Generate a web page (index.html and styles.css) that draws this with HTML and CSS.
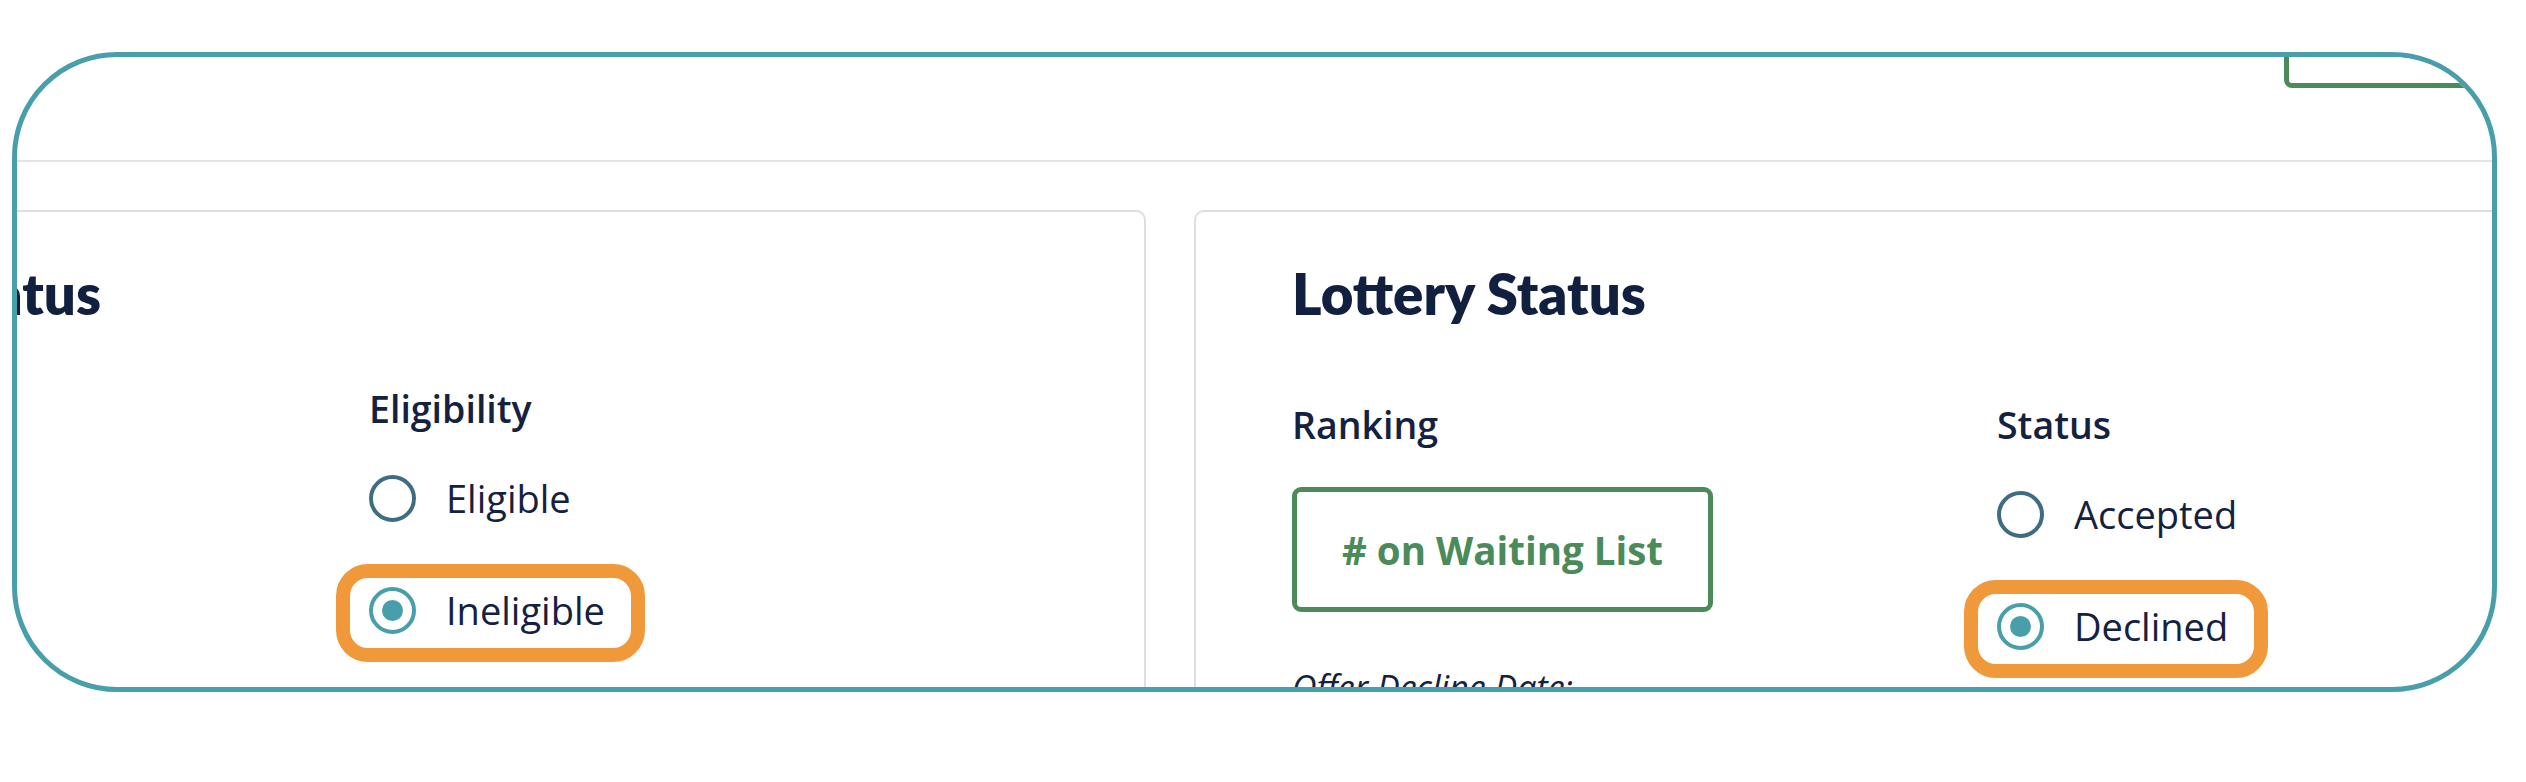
FILE: index.html
```html
<!DOCTYPE html>
<html lang="en">
<head>
<meta charset="utf-8">
<title>Lottery Status</title>
<link rel="stylesheet" href="styles.css">
</head>
<body>
<div class="frame">
  <header class="topbar">
    <div class="topbar-action" aria-hidden="true"></div>
  </header>
  <main class="cards">
    <section class="card card--left">
      <h2 class="card-title">Application Status</h2>
      <div class="card-grid">
        <div class="field"></div>
        <div class="field">
          <h3 class="field-label">Eligibility</h3>
          <div class="radio-group">
            <div class="radio"><span class="radio-dot"></span><span class="radio-text">Eligible</span></div>
            <div class="radio radio--checked radio--highlight"><span class="radio-dot"></span><span class="radio-text">Ineligible</span></div>
          </div>
        </div>
      </div>
    </section>
    <section class="card card--right">
      <h2 class="card-title">Lottery Status</h2>
      <div class="card-grid">
        <div class="field">
          <h3 class="field-label">Ranking</h3>
          <div class="rank-button"># on Waiting List</div>
          <p class="offer-date">Offer Decline Date:</p>
        </div>
        <div class="field">
          <h3 class="field-label">Status</h3>
          <div class="radio-group">
            <div class="radio"><span class="radio-dot"></span><span class="radio-text">Accepted</span></div>
            <div class="radio radio--checked radio--highlight"><span class="radio-dot"></span><span class="radio-text">Declined</span></div>
          </div>
        </div>
      </div>
    </section>
  </main>
</div>
</body>
</html>
```

FILE: styles.css
```css
* { box-sizing: border-box; }

html, body {
  margin: 0;
  background: #ffffff;
}

body {
  width: 2526px;
  height: 782px;
  overflow: hidden;
  font-family: "Open Sans", "Liberation Sans", sans-serif;
  color: #14213f;
}

.frame {
  margin: 52px 0 0 12px;
  width: 2485px;
  height: 640px;
  border: 5px solid #489fab;
  border-radius: 105px;
  overflow: hidden;
  background: #ffffff;
}

.topbar {
  height: 105px;
  border-bottom: 2px solid #e3e3e3;
  display: flex;
  justify-content: flex-end;
}

.topbar-action {
  flex: none;
  width: 300px;
  height: 80px;
  margin-top: -49px;
  margin-right: -92px;
  border: 5px solid #4b8b5a;
  border-radius: 8px;
  background: #ffffff;
}

.cards {
  display: flex;
  gap: 48px;
  padding-top: 48px;
  margin-left: -451px;
}

.card {
  flex: none;
  width: 1580px;
  height: 600px;
  border: 2px solid #dedede;
  border-radius: 10px;
  padding: 48px 0 0 96px;
}

.card-title {
  margin: 0;
  font-family: Lato, "Open Sans", sans-serif;
  font-weight: 800;
  font-size: 56.3px;
  line-height: 67px;
  color: #12203f;
  white-space: nowrap;
}

.card--left .card-title { margin-left: -28px; }

.card-grid {
  display: grid;
  grid-template-columns: 705px 1fr;
}

.card--left .card-grid { margin-top: 55px; }
.card--right .card-grid { margin-top: 71px; }

.field-label {
  margin: 0;
  font-weight: 600;
  font-size: 37.5px;
  line-height: 54px;
  color: #14213f;
}

.radio-group {
  display: flex;
  flex-direction: column;
  gap: 56px;
  margin-top: 34px;
}

.radio {
  position: relative;
  display: flex;
  align-items: center;
  gap: 30px;
  height: 56px;
  width: max-content;
}

.radio-dot {
  flex: none;
  width: 47px;
  height: 47px;
  border: 4px solid #3e6c82;
  border-radius: 50%;
  display: grid;
  place-items: center;
}

.radio--checked .radio-dot {
  border-color: #489fab;
}

.radio--checked .radio-dot::after {
  content: "";
  width: 21px;
  height: 21px;
  border-radius: 50%;
  background: #489fab;
}

.radio-text {
  font-size: 38px;
  line-height: 1;
  color: #14213f;
}

.radio--highlight::before {
  content: "";
  position: absolute;
  inset: -18px -40px -24px -33px;
  border: 14px solid #f0993b;
  border-radius: 32px;
}

.rank-button {
  margin-top: 35px;
  width: 421px;
  height: 125px;
  border: 5px solid #4b8b5a;
  border-radius: 9px;
  display: flex;
  align-items: center;
  justify-content: center;
  font-weight: 700;
  font-size: 38.5px;
  color: #4b8b5a;
  background: #ffffff;
}

.offer-date {
  margin: 53px 0 0;
  font-style: italic;
  font-size: 34px;
  line-height: 45px;
  color: #14213f;
}
```
